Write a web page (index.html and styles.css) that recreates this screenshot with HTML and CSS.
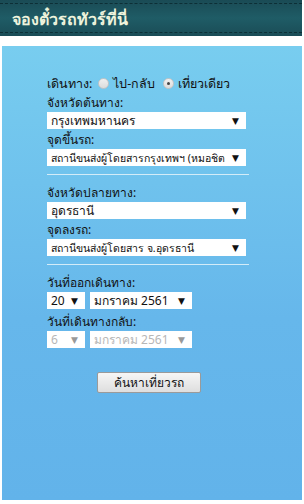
FILE: index.html
```html
<!DOCTYPE html>
<html lang="th">
<head>
    <meta charset="UTF-8">
    <title>จองตั๋วรถทัวร์</title>
    <link rel="stylesheet" href="styles.css">
</head>
<body>

    <div class="header">
        <h2>จองตั๋วรถทัวร์ที่นี่</h2>
    </div>

    <div class="panel">
        <form class="booking">
            <div class="trip-type">
                <span>เดินทาง:</span>
                <label><input type="radio" name="trip"> ไป-กลับ</label>
                <label><input type="radio" name="trip" checked> เที่ยวเดียว</label>
            </div>

            <label class="field-label">จังหวัดต้นทาง:</label>
            <div class="select-box"><select><option>กรุงเทพมหานคร</option></select></div>
            <label class="field-label">จุดขึ้นรถ:</label>
            <div class="select-box small"><select><option>สถานีขนส่งผู้โดยสารกรุงเทพฯ (หมอชิต</option></select></div>

            <hr>

            <label class="field-label">จังหวัดปลายทาง:</label>
            <div class="select-box"><select><option>อุดรธานี</option></select></div>
            <label class="field-label">จุดลงรถ:</label>
            <div class="select-box small"><select><option>สถานีขนส่งผู้โดยสาร จ.อุดรธานี</option></select></div>

            <hr>

            <label class="field-label">วันที่ออกเดินทาง:</label>
            <div class="date-row">
                <div class="select-box day"><select><option>20</option></select></div>
                <div class="select-box month"><select><option>มกราคม 2561</option></select></div>
            </div>
            <label class="field-label">วันที่เดินทางกลับ:</label>
            <div class="date-row disabled">
                <div class="select-box day"><select disabled><option>6</option></select></div>
                <div class="select-box month"><select disabled><option>มกราคม 2561</option></select></div>
            </div>

            <div class="actions">
                <button type="button">ค้นหาเที่ยวรถ</button>
            </div>
        </form>
    </div>

</body>
</html>
```

FILE: styles.css
```css
/* Base */
* {
    margin: 0;
    padding: 0;
    box-sizing: border-box;
}

body {
    font-family: Tahoma, "Noto Sans", "DejaVu Sans", sans-serif;
    font-size: 12px;
    color: #111;
    background: #ffffff;
    width: 304px;
    height: 504px;
}

/* Header bar */
.header {
    width: 302px;
    height: 36px;
    background: #1d5560;
    background-image: linear-gradient(#1a4b55, #1f5c66 50%, #1a4c56);
    padding: 3px 0;
}

.header h2 {
    height: 30px;
    border-top: 1px dashed #0d2f36;
    border-bottom: 1px dashed #0d2f36;
    color: #eef3dc;
    font-size: 16px;
    font-weight: bold;
    line-height: 26px;
    padding: 2px 0 0 12px;
}

/* Blue panel */
.panel {
    margin: 10px 2px 0 2px;
    height: 454px;
    background: linear-gradient(#78cdef, #66b7eb 60%, #62b3ea);
    padding: 27px 0 0 45px;
}

.booking {
    width: 204px;
}

.trip-type {
    display: flex;
    align-items: center;
    height: 21px;
    font-size: 12.5px;
}

.trip-type label {
    display: flex;
    align-items: center;
    margin-right: 2px;
}

.trip-type input {
    appearance: none;
    flex-shrink: 0;
    width: 11px;
    height: 11px;
    border-radius: 50%;
    background: linear-gradient(#f0f0f0, #dcdcdc);
    border: 1px solid #c4c4c4;
    margin: 0 4px 0 6px;
    position: relative;
}

.trip-type input:checked::after {
    content: "";
    position: absolute;
    left: 3px;
    top: 3px;
    width: 3px;
    height: 3px;
    border-radius: 50%;
    background: #444;
}

.field-label {
    display: block;
    height: 18px;
    line-height: 18px;
}

/* Select boxes */
.select-box {
    position: relative;
    width: 199px;
    height: 17px;
    background: #ffffff;
    margin-bottom: 2px;
}

.select-box::after {
    content: "▼";
    position: absolute;
    right: 7px;
    top: 2px;
    font-size: 9px;
    line-height: 13px;
    color: #111;
    pointer-events: none;
}

.select-box select {
    appearance: none;
    width: 100%;
    height: 17px;
    border: none;
    background: transparent;
    font-family: inherit;
    font-size: 12px;
    color: #111;
    padding: 0 14px 0 4px;
    outline: none;
}

.select-box.small select {
    font-size: 10.5px;
    padding-right: 16px;
}

hr {
    border: none;
    border-top: 1px solid #d3ecf8;
    width: 202px;
    margin: 8px 0 9px 0;
}

.date-row {
    display: flex;
    gap: 5px;
    margin-bottom: 2px;
}

.date-row .select-box.day {
    width: 38px;
}

.date-row .select-box.month {
    width: 102px;
}

.date-row.disabled select {
    color: #999;
}

.date-row.disabled .select-box::after {
    color: #999;
}

/* Search button */
.actions {
    padding: 20px 0 0 50px;
}

.actions button {
    width: 104px;
    height: 21px;
    font-family: inherit;
    font-size: 12px;
    color: #111;
    background: linear-gradient(#f6f6f6, #dedede);
    border: 1px solid #9a9a9a;
    border-radius: 2px;
}
```
